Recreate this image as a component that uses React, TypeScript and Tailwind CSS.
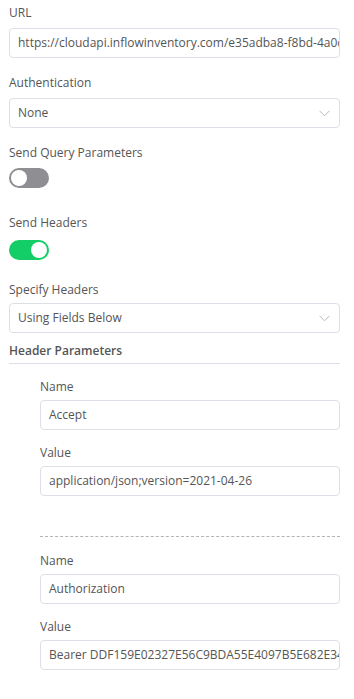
import React from "react";

const font = { fontFamily: '"Open Sans", "Noto Sans", sans-serif' };

function Label({ children }: { children: React.ReactNode }) {
  return <div className="text-[12px] leading-[18px] text-[#555555] mb-[6px]">{children}</div>;
}

function Input({ value }: { value: string }) {
  return (
    <div className="h-[30px] border border-[#dcdfe6] rounded-[4px] bg-white flex items-center pl-[8px] overflow-hidden whitespace-nowrap text-[12px] text-[#555555]">
      {value}
    </div>
  );
}

function Select({ value }: { value: string }) {
  return (
    <div className="h-[30px] border border-[#dcdfe6] rounded-[4px] bg-white flex items-center justify-between pl-[8px] pr-[9px] text-[12px] text-[#555555]">
      <span>{value}</span>
      <svg width="11" height="7" viewBox="0 0 11 7" fill="none">
        <path d="M0.5 0.8 L5.5 5.8 L10.5 0.8" stroke="#b4b8c2" strokeWidth="1" />
      </svg>
    </div>
  );
}

function Toggle({ on }: { on: boolean }) {
  return (
    <div
      className={`w-[40px] h-[20px] rounded-full flex items-center px-[2px] ${
        on ? "bg-[#13ce66] justify-end" : "bg-[#8e8e93] justify-start"
      }`}
    >
      <div className="w-[16px] h-[16px] rounded-full bg-white" />
    </div>
  );
}

export default function App() {
  return (
    <div className="w-[354px] h-[699px] bg-white overflow-hidden" style={font}>
      <div className="pl-[9px] pr-[14px] pt-[4px]">
        <Label>URL</Label>
        <Input value="https://cloudapi.inflowinventory.com/e35adba8-f8bd-4a0c-b2d1-a3f7" />

        <div className="mt-[16px]">
          <Label>Authentication</Label>
          <Select value="None" />
        </div>

        <div className="mt-[16px]">
          <Label>Send Query Parameters</Label>
          <Toggle on={false} />
        </div>

        <div className="mt-[26px]">
          <div className="text-[12px] leading-[18px] text-[#555555] mb-[8px]">Send Headers</div>
          <Toggle on={true} />
        </div>

        <div className="mt-[21px]">
          <div className="text-[12px] leading-[18px] text-[#555555] mb-[4px]">Specify Headers</div>
          <Select value="Using Fields Below" />
        </div>

        <div className="mt-[9px] text-[12px] leading-[18px] font-semibold text-[#555555] pb-[3px] border-b border-[#dcdfe6]">
          Header Parameters
        </div>

        <div className="pl-[31px] pt-[14px]">
          <div className="text-[12px] leading-[18px] text-[#555555] mb-[4px]">Name</div>
          <Input value="Accept" />
          <div className="mt-[14px]">
            <div className="text-[12px] leading-[18px] text-[#555555] mb-[4px]">Value</div>
            <Input value="application/json;version=2021-04-26" />
          </div>
          <div className="mt-[40px] border-t border-dashed border-[#b0b3ba]" />
          <div className="pt-[15px]">
            <div className="text-[12px] leading-[18px] text-[#555555] mb-[4px]">Name</div>
            <Input value="Authorization" />
            <div className="mt-[14px]">
              <div className="text-[12px] leading-[18px] text-[#555555] mb-[4px]">Value</div>
              <Input value="Bearer DDF159E02327E56C9BDA55E4097B5E682E34A1C0" />
            </div>
          </div>
        </div>
      </div>
    </div>
  );
}
